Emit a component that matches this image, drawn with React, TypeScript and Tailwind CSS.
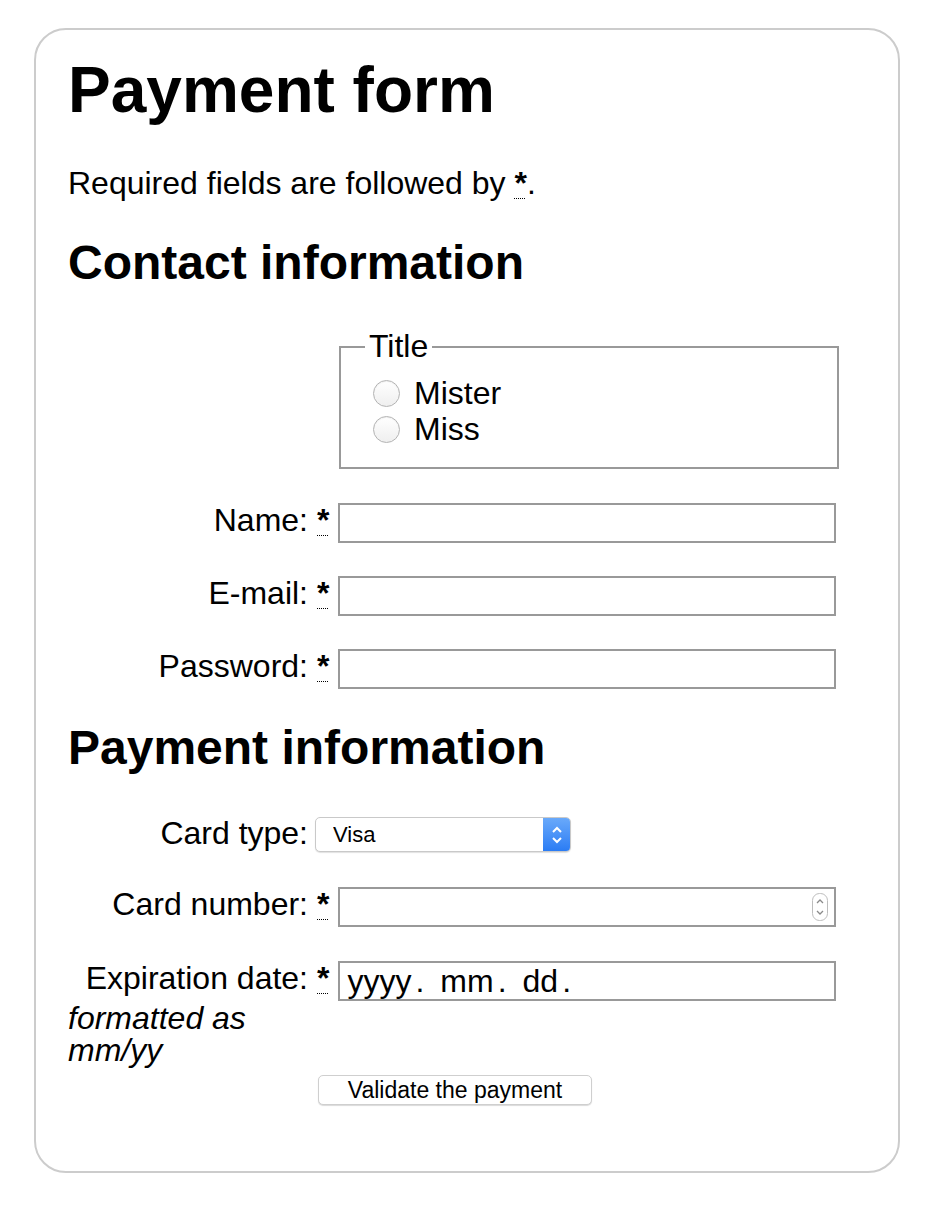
import React from "react";

const Req = () => (
  <strong className="font-bold">
    <abbr title="required" className="underline decoration-dotted decoration-1 underline-offset-[4px]">
      *
    </abbr>
  </strong>
);

const Label = ({ text, required = true, lh = "leading-[35px]" }: { text: string; required?: boolean; lh?: string }) => (
  <>
    <span className={`w-[240px] shrink-0 text-right ${lh}`}>{text}</span>
    {required && (
      <span className={lh}>
        <Req />
      </span>
    )}
  </>
);

const Spinner = () => (
  <svg width="16" height="28" viewBox="0 0 16 28" className="mr-[6px] shrink-0">
    <rect x="0.5" y="0.5" width="15" height="27" rx="7" fill="#fff" stroke="#bdbdbd" />
    <path d="M5 10 L8 7 L11 10" fill="none" stroke="#8a8a8a" strokeWidth="1.3" />
    <path d="M5 18 L8 21 L11 18" fill="none" stroke="#8a8a8a" strokeWidth="1.3" />
  </svg>
);

const App = () => {
  return (
    <div className="min-h-screen bg-white pt-[28px] font-['Liberation_Sans',Arial,sans-serif] text-[32px] text-black">
      <form className="ml-[34px] w-[866px] rounded-[32px] border-2 border-[#ccc] px-8 pt-8 pb-[66px]">
        <h1 className="text-[64px] font-bold leading-[56px]">Payment form</h1>
        <p className="mt-[47px] leading-[37px]">
          Required fields are followed by <Req />.
        </p>

        <section>
          <h2 className="mt-[33px] text-[48px] font-bold leading-[56px]">Contact information</h2>
          <fieldset className="mt-[37px] ml-[271px] w-[500px] border-2 border-[#999] px-[24px] pt-[10px] pb-[20px]">
            <legend className="px-[4px] leading-[37px]">Title</legend>
            <ul>
              <li>
                <label className="flex items-center gap-[14px] leading-[36px]">
                  <input
                    type="radio"
                    name="title"
                    className="ml-[8px] h-[27px] w-[27px] appearance-none rounded-full border border-[#b3b3b3] bg-gradient-to-b from-white to-[#efefef] shadow-[inset_0_1px_1px_rgba(0,0,0,0.06)]"
                  />
                  Mister
                </label>
              </li>
              <li>
                <label className="flex items-center gap-[14px] leading-[36px]">
                  <input
                    type="radio"
                    name="title"
                    className="ml-[8px] h-[27px] w-[27px] appearance-none rounded-full border border-[#b3b3b3] bg-gradient-to-b from-white to-[#efefef] shadow-[inset_0_1px_1px_rgba(0,0,0,0.06)]"
                  />
                  Miss
                </label>
              </li>
            </ul>
          </fieldset>

          <div className="mt-[34px] flex items-start gap-[9px]">
            <Label text="Name:" />
            <input type="text" className="h-[40px] w-[498px] border-2 border-[#999] px-[4px] outline-none" />
          </div>
          <div className="mt-[33px] flex items-start gap-[9px]">
            <Label text="E-mail:" />
            <input type="email" className="h-[40px] w-[498px] border-2 border-[#999] px-[4px] outline-none" />
          </div>
          <div className="mt-[33px] flex items-start gap-[9px]">
            <Label text="Password:" />
            <input type="password" className="h-[40px] w-[498px] border-2 border-[#999] px-[4px] outline-none" />
          </div>
        </section>

        <section>
          <h2 className="mt-[31px] text-[48px] font-bold leading-[56px]">Payment information</h2>

          <div className="mt-[41px] flex items-start gap-[7px]">
            <Label text="Card type:" required={false} lh="leading-[32px]" />
            <div className="flex h-[35px] w-[256px] overflow-hidden rounded-[5px] border border-[#c9c9c9] bg-white shadow-[0_1px_1px_rgba(0,0,0,0.12)]">
              <select className="flex-1 appearance-none bg-transparent pl-[17px] text-[22px] outline-none">
                <option>Visa</option>
                <option>Mastercard</option>
                <option>American Express</option>
              </select>
              <span className="flex w-[27px] items-center justify-center bg-gradient-to-b from-[#69a9fa] to-[#2a7cf4]">
                <svg width="12" height="22" viewBox="0 0 12 22">
                  <path d="M2 8 L6 4 L10 8" fill="none" stroke="#fff" strokeWidth="2" />
                  <path d="M2 14 L6 18 L10 14" fill="none" stroke="#fff" strokeWidth="2" />
                </svg>
              </span>
            </div>
          </div>

          <div className="mt-[35px] flex items-start gap-[9px]">
            <Label text="Card number:" />
            <div className="flex h-[40px] w-[498px] items-center border-2 border-[#999]">
              <input type="text" inputMode="numeric" className="h-full min-w-0 flex-1 px-[4px] outline-none" />
              <Spinner />
            </div>
          </div>

          <div className="mt-[34px] flex items-start gap-[9px]">
            <Label text="Expiration date:" />
            <div className="flex h-[40px] w-[498px] items-center gap-[16px] border-2 border-[#999] pl-[7px] leading-[34px]">
              <span className="flex gap-[4px]">
                <span>yyyy</span>
                <span>.</span>
              </span>
              <span className="flex gap-[4px]">
                <span>mm</span>
                <span>.</span>
              </span>
              <span className="flex gap-[4px]">
                <span>dd</span>
                <span>.</span>
              </span>
            </div>
          </div>
          <em className="mt-[1px] block w-[240px] italic leading-[32px]">formatted as mm/yy</em>
        </section>

        <section>
          <button
            type="submit"
            className="mt-[9px] ml-[250px] block h-[30px] w-[274px] rounded-[5px] border border-[#cfcfcf] bg-white text-[23px] leading-[28px] shadow-[0_1px_1px_rgba(0,0,0,0.15)]"
          >
            Validate the payment
          </button>
        </section>
      </form>
    </div>
  );
};

export default App;
